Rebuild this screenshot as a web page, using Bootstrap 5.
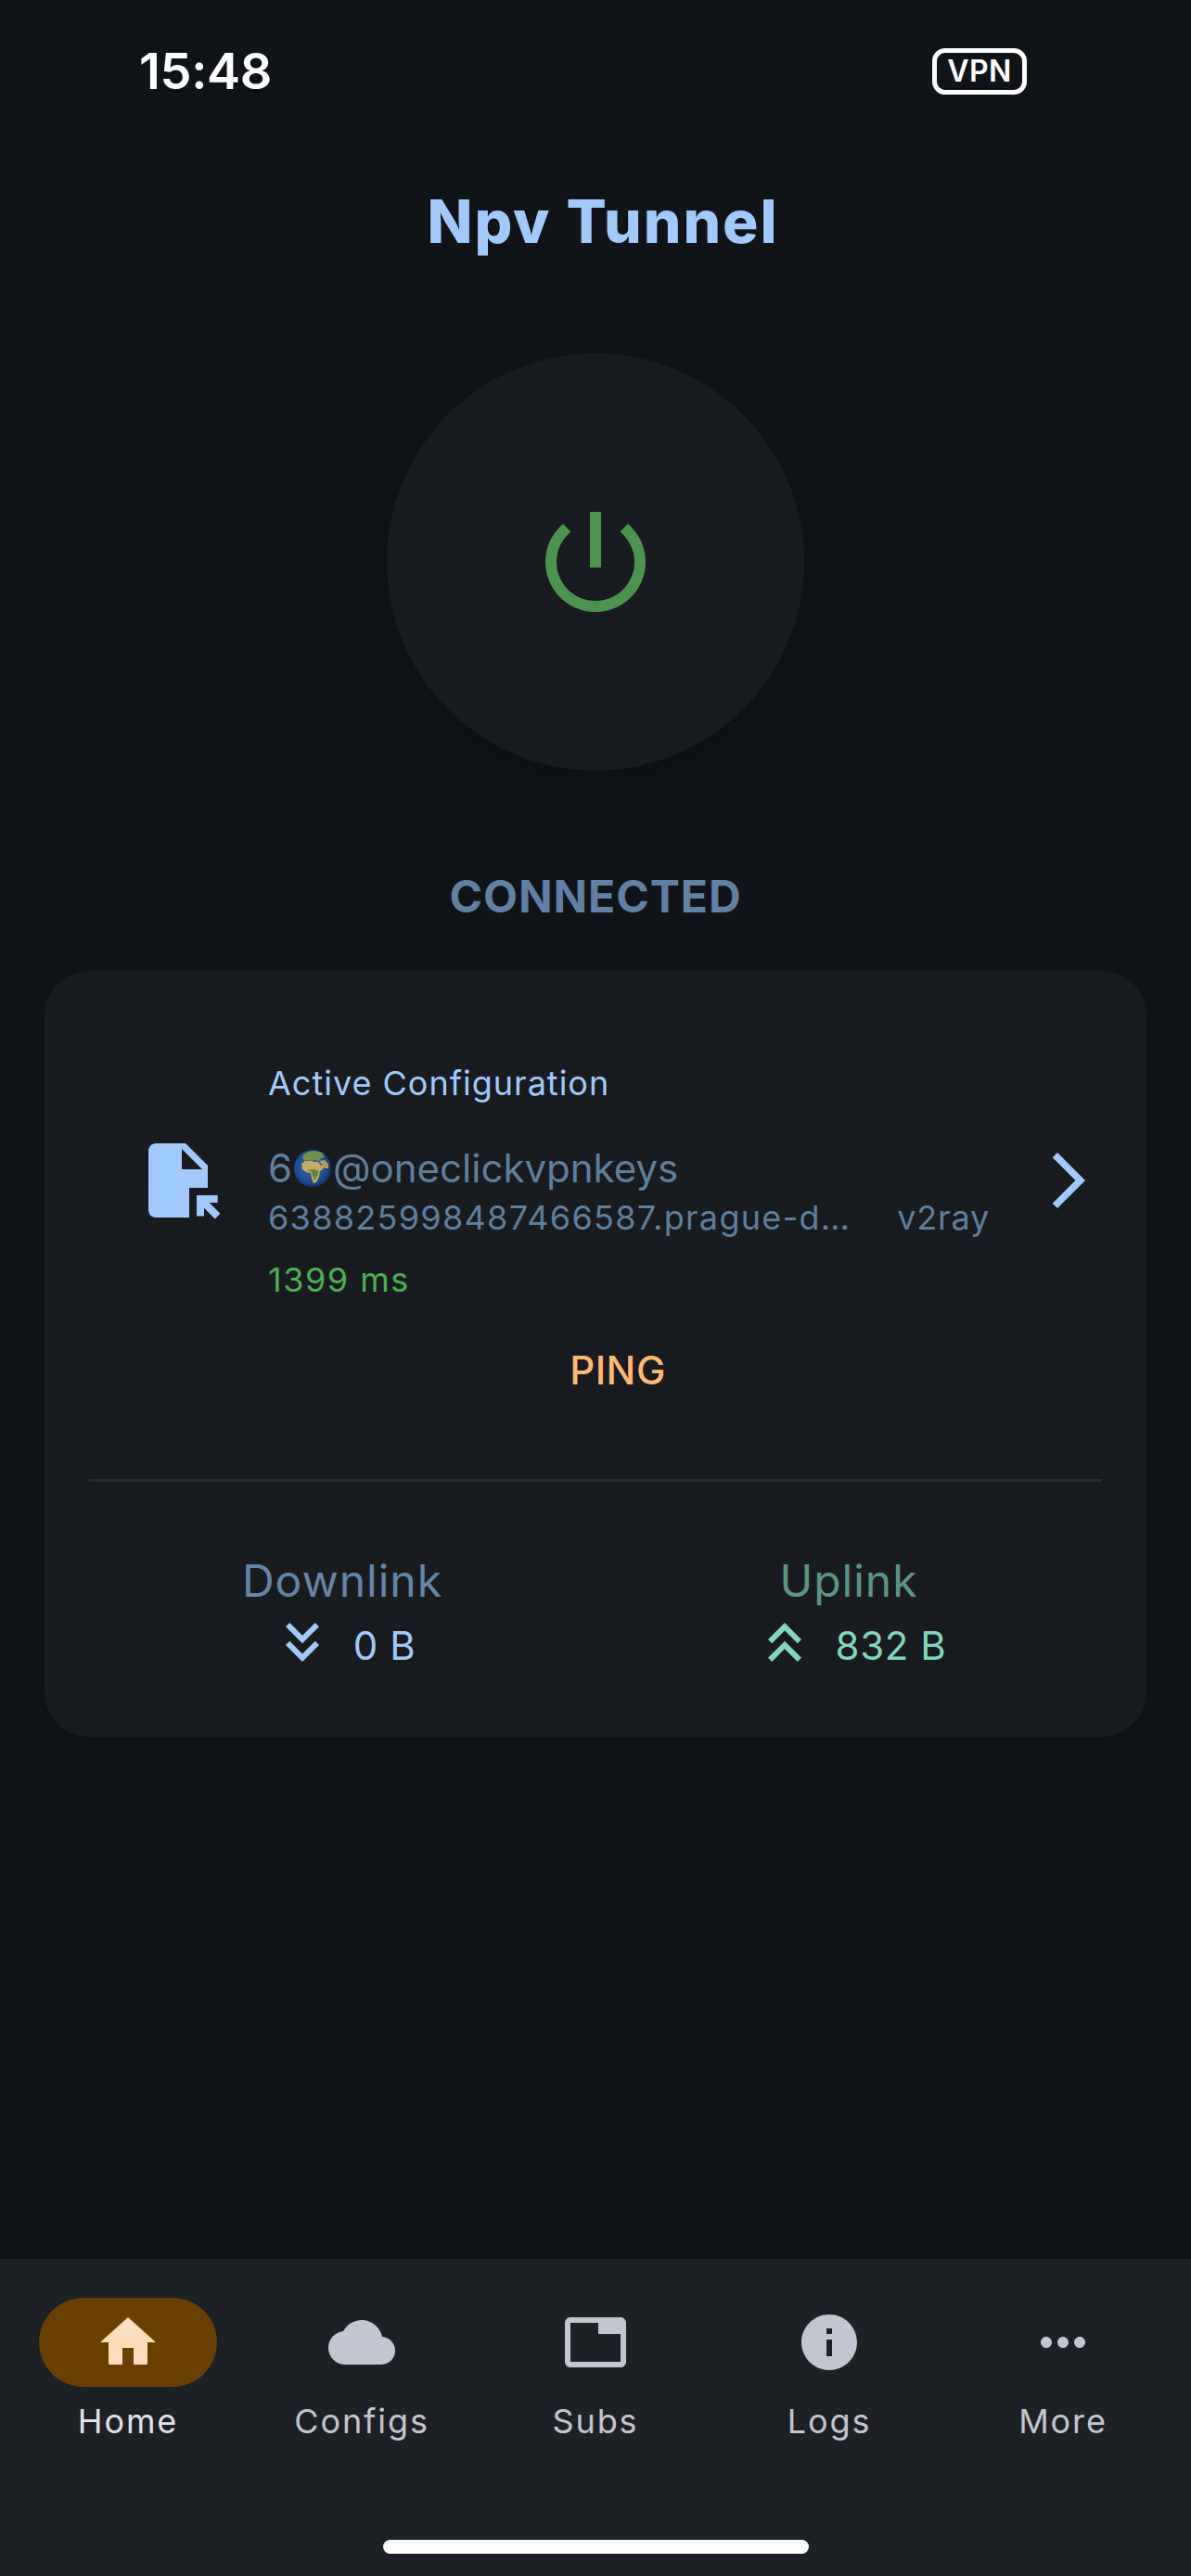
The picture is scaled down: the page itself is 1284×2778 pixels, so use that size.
<!doctype html>
<html lang="en"><head><meta charset="utf-8"><title>Npv Tunnel</title>
<link rel="stylesheet" href="https://cdn.jsdelivr.net/npm/bootstrap@5.3.0/dist/css/bootstrap.min.css">
<style>
html,body{margin:0;background:#101419}
body{font-family:Inter,"Liberation Sans",sans-serif;color:#e2e2e9}
.app-screen{width:1284px;height:2778px;overflow:hidden;background:#101419}
.status-row{height:120px;padding:44px 177px 0 150px}
.clock{font:600 54px/66px Inter,"Liberation Sans",sans-serif;color:#fff;letter-spacing:-.3px}
.vpn-tag{width:102px;height:50px;margin-top:8px;border:5px solid #fff;border-radius:14px;font:600 32px/40px Inter,"Liberation Sans",sans-serif;color:#fff;text-align:center;letter-spacing:.5px}
.app-title{font:800 64px/80px Inter,sans-serif;color:#a0cafd;margin:0;padding:79px 0 0 16px;letter-spacing:2px}
.power-disc{width:450px;height:450px;margin-top:102px;border-radius:50%;background:#181b20;box-shadow:0 12px 36px rgba(0,0,0,.22);border:0;padding:0}
.conn-state{font:700 48px/60px Inter,sans-serif;color:#6080a5;letter-spacing:1px;margin-top:105.5px}
.info-panel{margin:50.5px 48px 0;height:826px;border-radius:48px;background:#181b20;box-shadow:0 6px 18px rgba(0,0,0,.18);padding:0 48px}
.cfg-row{height:406px;padding-top:97px}
.cfg-left{width:193px;padding:81px 0 0 48px}
.cfg-body{width:794px}
.cfg-end{padding-top:93px;margin-left:33px}
.lbl-active{font-size:36px;line-height:48px;color:#a0cafd;letter-spacing:1px}
.cfg-name{font-size:42px;line-height:56px;color:#5f7f9f;margin-top:40px}
.cfg-name svg{margin:0 2px}
.cfg-sub{font-size:36px;line-height:46px;color:#5f7f9f;margin-top:2px;letter-spacing:1.3px}
.ver-tag{margin-right:16px;letter-spacing:.8px}
.cfg-ping{font-size:36px;line-height:46px;color:#4caf50;letter-spacing:1.5px;margin-top:21px}
.ping-btn{font-size:42px;line-height:50px;font-weight:500;color:#ffb870;background:none;border:0;padding:0;letter-spacing:.5px}
.ping-wrap{height:142px;padding-left:48px}
.rule-line{margin:0;height:3px;border:0;background:#272c33;opacity:1}
.rates-row{padding-top:77px}
.rate-cell{width:50%}
.rate-name{font-size:48px;line-height:60px;letter-spacing:1px}
.tone-a{color:#6484a8}.tone-b{color:#5c9484}
.rate-val{font-size:42px;line-height:48px;gap:19px;letter-spacing:.6px}
.rate-val span{padding-top:8px}
.tone-c{color:#a0cafd}.tone-d{color:#80d8bc}
.nav-dock{position:relative;height:342px;background:#1d2025;padding:42px 12px 0}
.dock-item{width:252px;color:#c2c6d0}
.dock-item.active-tab{color:#e2e2e9}
.dock-icon{width:192px;height:96px;border-radius:48px;display:flex;align-items:center;justify-content:center}
.active-tab .dock-icon{background:#6b3f00}
.dock-label{font-size:36px;line-height:46px;margin-top:14px;letter-spacing:1.9px}
.home-bar{position:absolute;left:413px;top:303px;width:459px;height:15px;border-radius:8px;background:#fff}
</style></head>
<body>
<div class="app-screen d-flex flex-column">
  <div class="status-row d-flex justify-content-between align-items-start">
    <div class="clock">15:48</div>
    <div class="vpn-tag">VPN</div>
  </div>
  <h1 class="app-title text-center">Npv Tunnel</h1>
  <div class="d-flex justify-content-center">
    <button class="power-disc d-flex align-items-center justify-content-center" aria-label="Power">
      <svg width="144" height="144" viewBox="0 0 24 24" fill="#4a954d"><path d="M13 3h-2v10h2V3zm4.83 2.17l-1.42 1.42C17.99 7.86 19 9.81 19 12c0 3.87-3.13 7-7 7s-7-3.13-7-7c0-2.19 1.01-4.14 2.58-5.42L6.17 5.17C4.23 6.82 3 9.26 3 12c0 4.97 4.03 9 9 9s9-4.03 9-9c0-2.74-1.23-5.18-3.17-6.83z"/></svg>
    </button>
  </div>
  <div class="conn-state text-center">CONNECTED</div>
  <div class="info-panel">
    <div class="cfg-row d-flex">
      <div class="cfg-left flex-shrink-0">
        <svg width="96" height="96" viewBox="0 0 24 24" fill="#a0cafd" class="d-block"><path d="M14 2H6c-1.1 0-1.99.9-1.99 2L4 20c0 1.1.89 2 1.99 2H15v-8h5V8l-6-6zm-1 7V3.5L18.5 9H13zm4 12.66V16h5.66v2h-2.24l2.95 2.95-1.41 1.41L19 19.41v2.24h-2z"/></svg>
      </div>
      <div class="cfg-body flex-shrink-0">
        <div class="lbl-active">Active Configuration</div>
        <div class="cfg-name d-flex align-items-center">6<svg width="40" height="40" viewBox="0 0 40 40" class="flex-shrink-0" role="img" aria-label="globe"><defs><radialGradient id="sea" cx=".45" cy=".45" r=".6"><stop offset="0" stop-color="#2f6cc0"/><stop offset=".75" stop-color="#1c4590"/><stop offset="1" stop-color="#12264f"/></radialGradient></defs><circle cx="20" cy="20" r="20" fill="url(#sea)"/><path d="M10 5l5-3 7-1 8 2 3 5-4 1-2 3-5-1-3 1-4-1-3 1-3-3z" fill="#6f8f4a"/><path d="M8 15l4-3 6 0 4 1 4 0 3 4 4-1-2 5-3 2-1 6-3 6-3 1-2-5-1-6-5-1-4-3z" fill="#c4ae5e"/><path d="M14 22l8-1 5 2-2 6-3 4-2-4-1-5z" fill="#64863a"/><path d="M27 12l6-1 4 4 0 5-4 0-3-4z" fill="#b49f50"/></svg>@oneclickvpnkeys</div>
        <div class="cfg-sub d-flex"><span>638825998487466587.prague-d…</span><span class="ms-auto ver-tag">v2ray</span></div>
        <div class="cfg-ping">1399 ms</div>
      </div>
      <div class="cfg-end flex-shrink-0">
        <svg width="72" height="72" viewBox="0 0 24 24" fill="#a0cafd" class="d-block"><path d="M6.23 20.23L8 22l10-10L8 2 6.23 3.77 14.46 12z"/></svg>
      </div>
    </div>
    <div class="ping-wrap text-center"><button class="ping-btn">PING</button></div>
    <hr class="rule-line">
    <div class="d-flex rates-row">
      <div class="rate-cell text-center">
        <div class="rate-name tone-a">Downlink</div>
        <div class="d-flex justify-content-center align-items-center rate-val tone-c">
          <svg width="72" height="72" viewBox="0 0 24 24" fill="#a0cafd"><path d="M18 6.41 16.59 5 12 9.58 7.41 5 6 6.41l6 6z"/><path d="M18 13l-1.41-1.41L12 16.17l-4.59-4.58L6 13l6 6z"/></svg>
          <span>0 B</span>
        </div>
      </div>
      <div class="rate-cell text-center">
        <div class="rate-name tone-b">Uplink</div>
        <div class="d-flex justify-content-center align-items-center rate-val tone-d">
          <svg width="72" height="72" viewBox="0 0 24 24" fill="#80d8bc"><path d="M6 17.59 7.41 19 12 14.42 16.59 19 18 17.59l-6-6z"/><path d="M6 11l1.41 1.41L12 7.83l4.59 4.58L18 11l-6-6z"/></svg>
          <span>832 B</span>
        </div>
      </div>
    </div>
  </div>
  <div class="flex-grow-1"></div>
  <nav class="nav-dock d-flex">
    <div class="dock-item active-tab d-flex flex-column align-items-center">
      <div class="dock-icon"><svg width="72" height="72" viewBox="0 0 24 24" fill="#ffdcbc"><path d="M10 20v-6h4v6h5v-8h3L12 3 2 12h3v8z"/></svg></div>
      <div class="dock-label">Home</div>
    </div>
    <div class="dock-item d-flex flex-column align-items-center">
      <div class="dock-icon"><svg width="72" height="72" viewBox="0 0 24 24" fill="#c2c6d0"><path d="M19.35 10.04C18.67 6.59 15.64 4 12 4 9.11 4 6.6 5.64 5.35 8.04 2.34 8.36 0 10.91 0 14c0 3.31 2.69 6 6 6h13c2.76 0 5-2.24 5-5 0-2.64-2.05-4.78-4.65-4.96z"/></svg></div>
      <div class="dock-label">Configs</div>
    </div>
    <div class="dock-item d-flex flex-column align-items-center">
      <div class="dock-icon"><svg width="72" height="72" viewBox="0 0 24 24" fill="#c2c6d0"><path d="M21 3H3c-1.1 0-2 .9-2 2v14c0 1.1.9 2 2 2h18c1.1 0 2-.9 2-2V5c0-1.1-.9-2-2-2zm0 16H3V5h10v4h8v10z"/></svg></div>
      <div class="dock-label">Subs</div>
    </div>
    <div class="dock-item d-flex flex-column align-items-center">
      <div class="dock-icon"><svg width="72" height="72" viewBox="0 0 24 24" fill="#c2c6d0"><path d="M12 2C6.48 2 2 6.48 2 12s4.48 10 10 10 10-4.48 10-10S17.52 2 12 2zm1 15h-2v-6h2v6zm0-8h-2V7h2v2z"/></svg></div>
      <div class="dock-label">Logs</div>
    </div>
    <div class="dock-item d-flex flex-column align-items-center">
      <div class="dock-icon"><svg width="72" height="72" viewBox="0 0 24 24" fill="#c2c6d0"><path d="M6 10c-1.1 0-2 .9-2 2s.9 2 2 2 2-.9 2-2-.9-2-2-2zm12 0c-1.1 0-2 .9-2 2s.9 2 2 2 2-.9 2-2-.9-2-2-2zm-6 0c-1.1 0-2 .9-2 2s.9 2 2 2 2-.9 2-2-.9-2-2-2z"/></svg></div>
      <div class="dock-label">More</div>
    </div>
    <div class="home-bar"></div>
  </nav>
</div>
<script src="https://cdn.jsdelivr.net/npm/bootstrap@5.3.0/dist/js/bootstrap.bundle.min.js"></script>
</body></html>
